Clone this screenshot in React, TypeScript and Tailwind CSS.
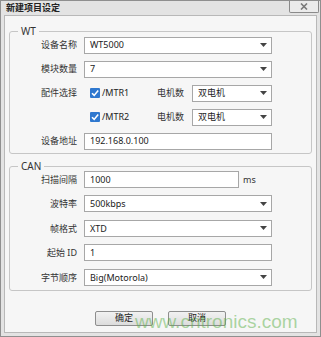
import React from "react";

const font = { fontFamily: '"Noto Sans", "Noto Sans CJK SC", sans-serif' };

function Arrow() {
  return (
    <svg width="7" height="4" viewBox="0 0 7 4" className="shrink-0">
      <path d="M0 0 H7 L3.5 4 Z" fill="#444" />
    </svg>
  );
}

function Select({ value, w = "w-[188px]" }: { value: string; w?: string }) {
  return (
    <div
      className={`flex h-[17px] ${w} items-center justify-between border border-[#a7a7a7] bg-white pl-[5px] pr-[4px] text-[9px] text-[#222]`}
    >
      <span>{value}</span>
      <Arrow />
    </div>
  );
}

function Input({ value, w = "w-[188px]" }: { value: string; w?: string }) {
  return (
    <div
      className={`flex h-[17px] ${w} items-center border border-[#a7a7a7] bg-white pl-[5px] text-[9px] text-[#222]`}
    >
      {value}
    </div>
  );
}

function Check() {
  return (
    <svg width="10" height="10" viewBox="0 0 10 10" className="shrink-0">
      <rect x="0" y="0" width="10" height="10" rx="1" fill="#2f78cf" />
      <path d="M2 5.2 L4.2 7.4 L8.2 2.6" stroke="#fff" strokeWidth="1.6" fill="none" />
    </svg>
  );
}

function Row({ label, children, h = "h-[24px]" }: { label: string; children: React.ReactNode; h?: string }) {
  return (
    <div className={`flex ${h} items-center`}>
      <div className="w-[67px] text-right text-[9px] text-[#333]">{label}</div>
      <div className="ml-[7px] flex items-center">{children}</div>
    </div>
  );
}

function Group({ title, children, className = "" }: { title: string; children: React.ReactNode; className?: string }) {
  return (
    <div className={`relative rounded-[3px] border border-[#c6c6c6] ${className}`}>
      <span className="absolute -top-[7px] left-[8px] bg-[#f6f6f6] px-[3px] text-[10px] leading-[12px] text-[#333]">
        {title}
      </span>
      {children}
    </div>
  );
}

function MotorRow({ name }: { name: string }) {
  return (
    <div className="flex w-[188px] items-center">
      <div className="ml-[6px] flex items-center gap-[2px]">
        <Check />
        <span className="text-[9px] text-[#222]">{name}</span>
      </div>
      <div className="flex-1" />
      <span className="text-[9px] text-[#333]">电机数</span>
      <div className="ml-[8px]">
        <Select value="双电机" w="w-[80px]" />
      </div>
    </div>
  );
}

export default function App() {
  return (
    <div
      className="relative flex h-[337px] w-[321px] flex-col overflow-hidden border border-[#8f8f8f] bg-[#e3e3e3]"
      style={font}
    >
      <div className="flex h-[14px] shrink-0 items-center pl-[5px] text-[9px] font-bold text-[#222]">
        新建项目设定
      </div>
      <div className="absolute right-[1px] top-0 flex h-[12px] w-[30px] items-center justify-center rounded-b-[2px] border border-t-0 border-[#8a8a8a] bg-[#ebebeb]">
        <svg width="8" height="7" viewBox="0 0 8 7">
          <path d="M1 0.5 L7 6.5 M7 0.5 L1 6.5" stroke="#7a7a7a" strokeWidth="1.6" />
        </svg>
      </div>

      <div className="mx-[3px] mb-[3px] flex flex-1 flex-col border border-[#b8b8b8] bg-[#f6f6f6] px-[4px] pt-[15px]">
        <Group title="WT" className="pt-[1px]">
          <Row label="设备名称">
            <Select value="WT5000" />
          </Row>
          <Row label="模块数量">
            <Select value="7" />
          </Row>
          <Row label="配件选择">
            <MotorRow name="/MTR1" />
          </Row>
          <Row label="">
            <MotorRow name="/MTR2" />
          </Row>
          <Row label="设备地址">
            <Input value="192.168.0.100" />
          </Row>
        </Group>

        <Group title="CAN" className="mt-[12px]">
          <Row label="扫描间隔" h="h-[24.5px]">
            <Input value="1000" w="w-[155px]" />
            <span className="ml-[4px] text-[9px] text-[#333]">ms</span>
          </Row>
          <Row label="波特率" h="h-[24.5px]">
            <Select value="500kbps" />
          </Row>
          <Row label="帧格式" h="h-[24.5px]">
            <Select value="XTD" />
          </Row>
          <Row label="起始 ID" h="h-[24.5px]">
            <Input value="1" />
          </Row>
          <Row label="字节顺序" h="h-[24.5px]">
            <Select value="Big(Motorola)" />
          </Row>
        </Group>

        <div className="mt-[20px] flex justify-center gap-[15px]">
          <button className="flex h-[15px] w-[58px] items-center justify-center rounded-[2px] border border-[#8e8e8e] bg-gradient-to-b from-[#f2f2f2] to-[#dcdcdc] text-[9px] text-[#222]">
            确定
          </button>
          <button className="flex h-[15px] w-[58px] items-center justify-center rounded-[2px] border border-[#8e8e8e] bg-gradient-to-b from-[#f2f2f2] to-[#dcdcdc] text-[9px] text-[#222]">
            取消
          </button>
        </div>
      </div>

      <div
        className="pointer-events-none absolute left-[134px] top-[311px] whitespace-nowrap text-[19px] leading-[19px] text-[#5cb04a]/50"
        style={{ fontFamily: '"Liberation Sans", Arial, sans-serif' }}
      >
        www.cntronics.com
      </div>
    </div>
  );
}
